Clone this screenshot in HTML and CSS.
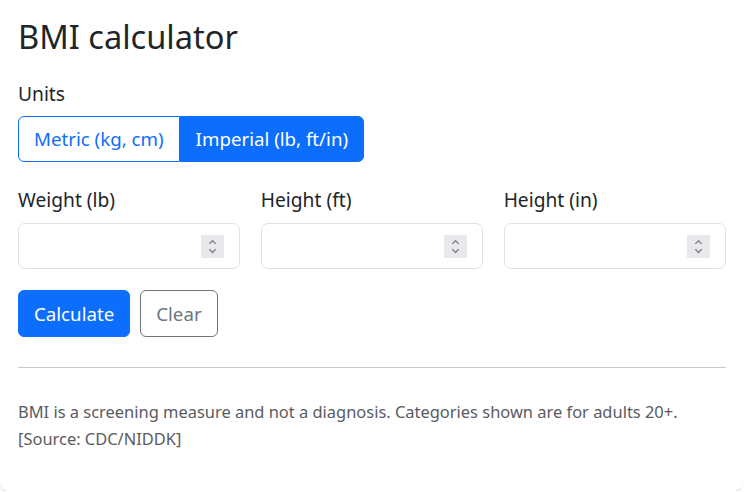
FILE: index.html
```html
<!DOCTYPE html>
<html lang="en">
<head>
<meta charset="utf-8">
<title>BMI calculator</title>
<link rel="stylesheet" href="styles.css">
</head>
<body>
<main class="card">
  <h1 class="title">BMI calculator</h1>

  <div class="label">Units</div>
  <div class="toggle" role="group">
    <button class="toggle-btn" type="button">Metric (kg, cm)</button>
    <button class="toggle-btn active" type="button">Imperial (lb, ft/in)</button>
  </div>

  <div class="fields">
    <div class="col">
      <label class="label field-label" for="w">Weight (lb)</label>
      <div class="field">
        <input class="input" id="w" type="text">
        <span class="spin"><svg width="23" height="23" viewBox="0 0 23 23"><path d="M8.3 8.9 L11.5 5.7 L14.7 8.9 M8.3 14.3 L11.5 17.5 L14.7 14.3" fill="none" stroke="#7c7c85" stroke-width="1.3"/></svg></span>
      </div>
    </div>
    <div class="col">
      <label class="label field-label" for="hf">Height (ft)</label>
      <div class="field">
        <input class="input" id="hf" type="text">
        <span class="spin"><svg width="23" height="23" viewBox="0 0 23 23"><path d="M8.3 8.9 L11.5 5.7 L14.7 8.9 M8.3 14.3 L11.5 17.5 L14.7 14.3" fill="none" stroke="#7c7c85" stroke-width="1.3"/></svg></span>
      </div>
    </div>
    <div class="col">
      <label class="label field-label" for="hi">Height (in)</label>
      <div class="field">
        <input class="input" id="hi" type="text">
        <span class="spin"><svg width="23" height="23" viewBox="0 0 23 23"><path d="M8.3 8.9 L11.5 5.7 L14.7 8.9 M8.3 14.3 L11.5 17.5 L14.7 14.3" fill="none" stroke="#7c7c85" stroke-width="1.3"/></svg></span>
      </div>
    </div>
  </div>

  <div class="actions">
    <button class="btn btn-primary" type="button">Calculate</button>
    <button class="btn btn-outline" type="button">Clear</button>
  </div>

  <hr class="rule">

  <p class="note">BMI is a screening measure and not a diagnosis. Categories shown are for adults 20+. [Source: CDC/NIDDK]</p>
</main>
</body>
</html>
```

FILE: styles.css
```css
* { box-sizing: border-box; }

html, body {
  margin: 0;
  padding: 0;
  background: #ffffff;
}

body {
  font-family: "Segoe UI", "Noto Sans", "Open Sans", sans-serif;
  color: #212529;
  font-size: 19.2px;
}

.card {
  width: 742px;
  height: 491px;
  padding: 17px 16px 0 18px;
  border-radius: 8px;
  background: #fff;
  box-shadow: 0 2px 2px -1px rgba(0, 0, 0, 0.22);
}

.title {
  margin: 0;
  font-size: 32.6px;
  line-height: 40px;
  font-weight: 400;
  color: #212529;
}

.label {
  display: block;
  font-size: 19.2px;
  line-height: 30px;
  color: #212529;
}

.title + .label {
  margin-top: 22px;
}

.toggle {
  display: inline-flex;
  margin-top: 7px;
  height: 46px;
}

.toggle-btn {
  font: inherit;
  font-size: 18.7px;
  line-height: 30px;
  height: 46px;
  padding: 0 15px;
  border: 1px solid #0d6efd;
  background: #fff;
  color: #0d6efd;
  cursor: pointer;
}

.toggle-btn:first-child {
  border-radius: 6px 0 0 6px;
}

.toggle-btn:last-child {
  border-radius: 0 6px 6px 0;
}

.toggle-btn.active {
  background: #0d6efd;
  color: #fff;
}

.fields {
  display: grid;
  grid-template-columns: repeat(3, minmax(0, 1fr));
  column-gap: 20.5px;
  margin-top: 23px;
}

.field-label {
  margin-bottom: 8px;
}

.field {
  display: flex;
  align-items: center;
  height: 46px;
  border: 1px solid #dee2e6;
  border-radius: 7px;
  padding: 0 15px 0 15px;
  background: #fff;
}

.input {
  flex: 1 1 0;
  width: 0;
  min-width: 0;
  border: none;
  outline: none;
  background: transparent;
  font: inherit;
  padding: 0;
  color: #212529;
}

.spin {
  display: block;
  flex: none;
  width: 23px;
  height: 23px;
  background: #e9e9ed;
  margin-top: 1px;
}

.spin svg {
  display: block;
}

.actions {
  display: flex;
  gap: 10px;
  margin-top: 21px;
}

.btn {
  font: inherit;
  font-size: 18.7px;
  line-height: 30px;
  height: 47px;
  padding: 0 15px;
  border-radius: 6px;
  cursor: pointer;
}

.btn-primary {
  background: #0d6efd;
  border: 1px solid #0d6efd;
  color: #fff;
}

.btn-outline {
  background: #fff;
  border: 1px solid #6c757d;
  color: #6c757d;
}

.rule {
  margin: 30px 0 0 0;
  border: 0;
  border-top: 1px solid #c8c9ca;
  height: 0;
}

.note {
  margin: 30px 0 0 0;
  font-size: 16.45px;
  line-height: 27px;
  color: #595c5f;
}
```
